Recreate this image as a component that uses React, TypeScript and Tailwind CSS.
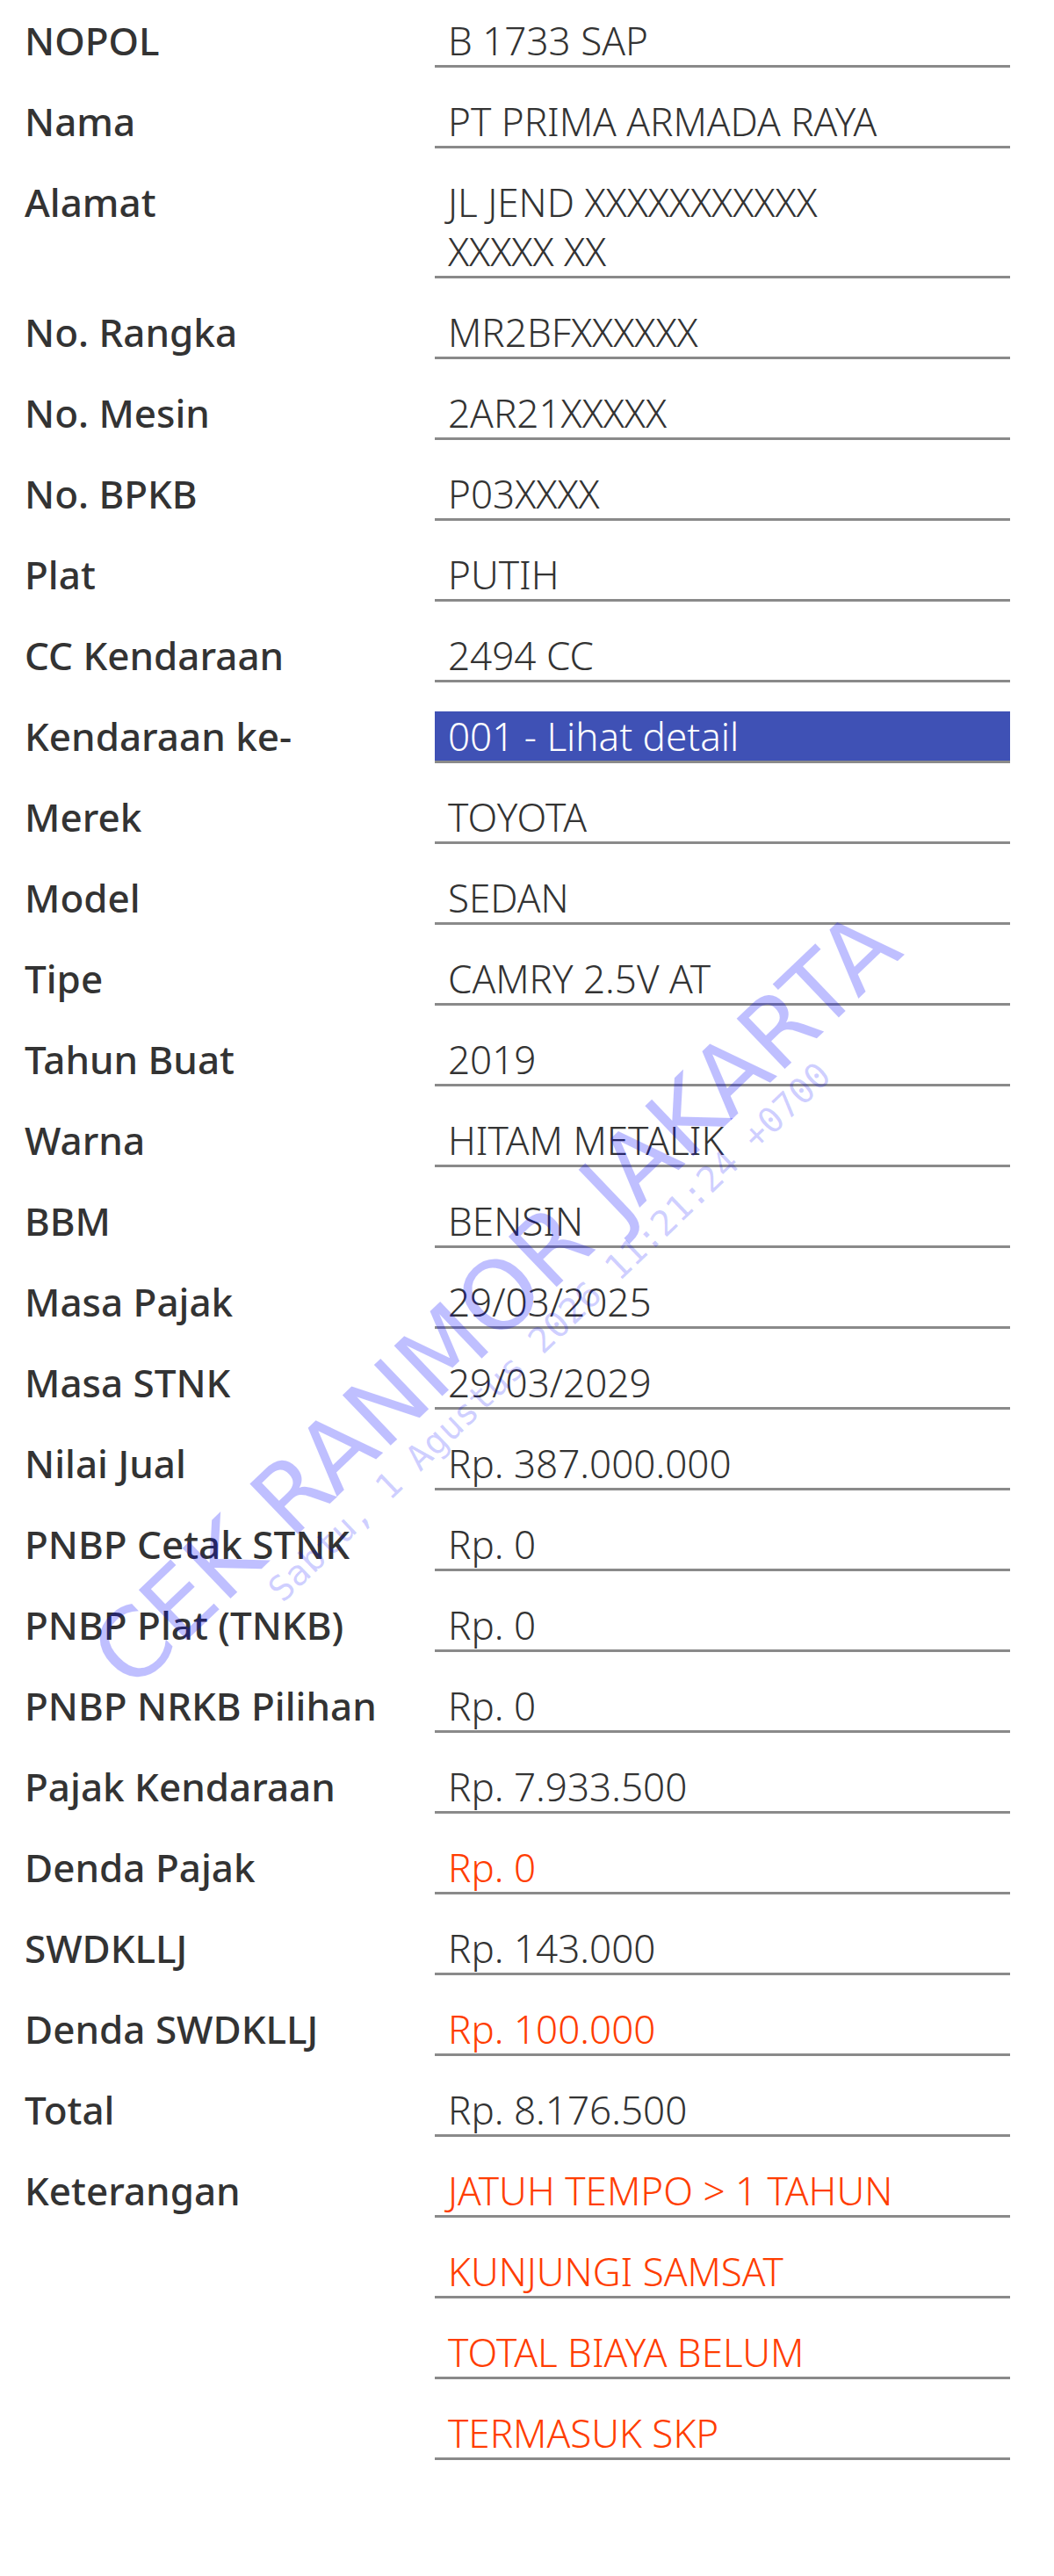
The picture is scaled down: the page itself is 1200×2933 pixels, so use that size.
import React from "react";

type Row = {
  label: string;
  value: React.ReactNode;
  tone?: "red" | "link";
};

const rows: Row[] = [
  { label: "NOPOL", value: "B 1733 SAP" },
  { label: "Nama", value: "PT PRIMA ARMADA RAYA" },
  {
    label: "Alamat",
    value: (
      <>
        JL JEND XXXXXXXXXXX
        <br />
        XXXXX XX
      </>
    ),
  },
  { label: "No. Rangka", value: "MR2BFXXXXXX" },
  { label: "No. Mesin", value: "2AR21XXXXX" },
  { label: "No. BPKB", value: "P03XXXX" },
  { label: "Plat", value: "PUTIH" },
  { label: "CC Kendaraan", value: "2494 CC" },
  { label: "Kendaraan ke-", value: "001 - Lihat detail", tone: "link" },
  { label: "Merek", value: "TOYOTA" },
  { label: "Model", value: "SEDAN" },
  { label: "Tipe", value: "CAMRY 2.5V AT" },
  { label: "Tahun Buat", value: "2019" },
  { label: "Warna", value: "HITAM METALIK" },
  { label: "BBM", value: "BENSIN" },
  { label: "Masa Pajak", value: "29/03/2025" },
  { label: "Masa STNK", value: "29/03/2029" },
  { label: "Nilai Jual", value: "Rp. 387.000.000" },
  { label: "PNBP Cetak STNK", value: "Rp. 0" },
  { label: "PNBP Plat (TNKB)", value: "Rp. 0" },
  { label: "PNBP NRKB Pilihan", value: "Rp. 0" },
  { label: "Pajak Kendaraan", value: "Rp. 7.933.500" },
  { label: "Denda Pajak", value: "Rp. 0", tone: "red" },
  { label: "SWDKLLJ", value: "Rp. 143.000" },
  { label: "Denda SWDKLLJ", value: "Rp. 100.000", tone: "red" },
  { label: "Total", value: "Rp. 8.176.500" },
  { label: "Keterangan", value: "JATUH TEMPO > 1 TAHUN", tone: "red" },
  { label: "", value: "KUNJUNGI SAMSAT", tone: "red" },
  { label: "", value: "TOTAL BIAYA BELUM", tone: "red" },
  { label: "", value: "TERMASUK SKP", tone: "red" },
];

function InfoRow({ row }: { row: Row }) {
  const valueClass =
    row.tone === "link"
      ? "bg-[#3f51b5] text-white"
      : row.tone === "red"
        ? "text-[#ff3d00]"
        : "text-[#333333]";

  return (
    <div className="flex items-start">
      <div className="w-[495px] shrink-0 pl-[28px] text-[44px] leading-[56px] font-medium text-[#333333]">
        {row.label}
      </div>
      <div
        className={`w-[655px] pl-[15px] text-[44px] leading-[56px] font-light border-b-[3px] border-[#8a8a8a] ${valueClass}`}
      >
        {row.value}
      </div>
    </div>
  );
}

export default function App() {
  return (
    <div
      className="relative w-[1200px] h-[2933px] overflow-hidden bg-white"
      style={{ fontFamily: '"Noto Sans", "Open Sans", sans-serif' }}
    >
      <div className="flex flex-col gap-[33px] pt-[18px]">
        {rows.map((row, i) => (
          <InfoRow key={i} row={row} />
        ))}
      </div>

      {/* watermark */}
      <div className="pointer-events-none absolute left-[124px] top-[1846px] origin-left -rotate-[43.7deg] whitespace-nowrap text-[109px] leading-none text-[rgba(0,0,255,0.25)] [font-family:'DejaVu_Sans',sans-serif]">
        CEK RANMOR JAKARTA
      </div>
      <div className="pointer-events-none absolute left-[312px] top-[1796px] origin-left -rotate-[43.7deg] whitespace-nowrap text-[40px] leading-none text-[rgba(0,0,255,0.2)] [font-family:'DejaVu_Sans_Mono',monospace]">
        Sabtu, 1 Agustus 2026 11:21:24 +0700
      </div>
    </div>
  );
}
